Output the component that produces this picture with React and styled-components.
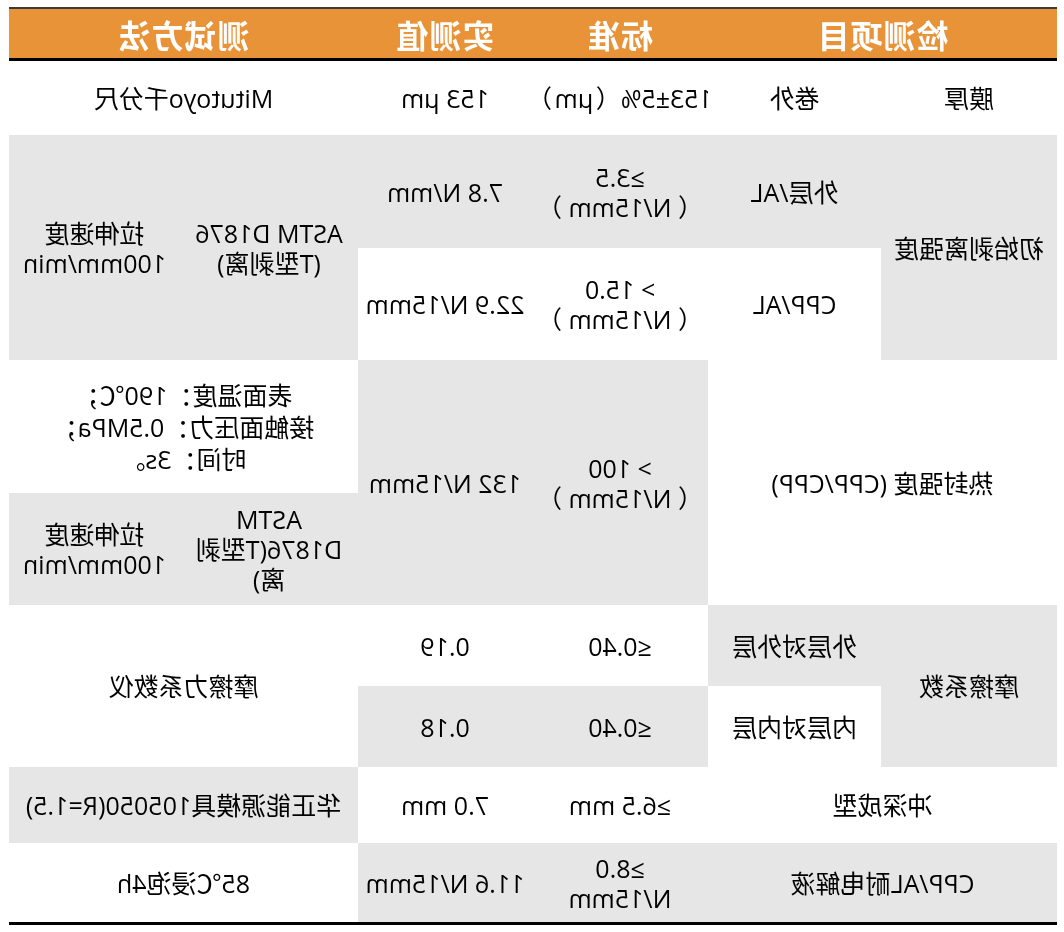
import React from 'react';
import styled, { createGlobalStyle } from 'styled-components';

const GlobalStyle = createGlobalStyle`
  html, body {
    margin: 0;
    padding: 0;
    background: #ffffff;
  }
  body {
    font-family: "Open Sans", "Noto Sans CJK SC", sans-serif;
  }
`;

// the reference shows the sheet mirrored left to right
const Page = styled.div`
  width: 1064px;
  box-sizing: border-box;
  padding: 7px 9px 0 7px;
  transform: scaleX(-1);
`;

const Table = styled.div`
  display: grid;
  grid-template-columns: 176px 173px 176px 174px 178px 171px;
  grid-template-rows: 52px 74px 113px 112px 133px 112px 81px 81px 76px 79px;
  border-top: 2px solid #3a3a3a;
  border-bottom: 3px solid #000000;
`;

const HeadCell = styled.div`
  grid-column: ${props => props.$col};
  grid-row: 1;
  box-sizing: border-box;
  background: #e99338;
  border-bottom: 3px solid #000000;
  color: #ffffff;
  font-family: "Noto Sans CJK SC", sans-serif;
  font-weight: 700;
  font-size: 32px;
  letter-spacing: 1px;
  display: flex;
  align-items: center;
  justify-content: center;
`;

const Cell = styled.div`
  grid-column: ${props => props.$col};
  grid-row: ${props => props.$row};
  background: ${props => (props.$shade ? '#e6e6e6' : '#ffffff')};
  color: #000000;
  font-size: 25px;
  line-height: ${props => props.$lh || '30px'};
  text-align: center;
  white-space: ${props => (props.$nowrap ? 'nowrap' : 'normal')};
  overflow: hidden;
  display: flex;
  align-items: center;
  justify-content: center;
`;

const App = () => {
  return (
    <>
      <GlobalStyle />
      <Page>
        <Table>
          <HeadCell $col="1 / 3">检测项目</HeadCell>
          <HeadCell $col="3">标准</HeadCell>
          <HeadCell $col="4">实测值</HeadCell>
          <HeadCell $col="5 / 7">测试方法</HeadCell>

          {/* 膜厚 */}
          <Cell $col="1" $row="2">膜厚</Cell>
          <Cell $col="2" $row="2">卷外</Cell>
          <Cell $col="3" $row="2" $nowrap>153±5%（{'\u200A'}μm{'\u200A'}）</Cell>
          <Cell $col="4" $row="2">153 μm</Cell>
          <Cell $col="5 / 7" $row="2">Mitutoyo千分尺</Cell>

          {/* 初始剥离强度 */}
          <Cell $col="1" $row="3 / 5" $shade>初始剥离强度</Cell>
          <Cell $col="2" $row="3" $shade>外层/AL</Cell>
          <Cell $col="2" $row="4">CPP/AL</Cell>
          <Cell $col="3" $row="3" $shade>≥3.5<br />（ N/15mm ）</Cell>
          <Cell $col="3" $row="4">&gt; 15.0<br />（ N/15mm ）</Cell>
          <Cell $col="4" $row="3" $shade>7.8 N/mm</Cell>
          <Cell $col="4" $row="4">22.9 N/15mm</Cell>
          <Cell $col="5" $row="3 / 5" $shade>ASTM D1876<br />(T型剥离)</Cell>
          <Cell $col="6" $row="3 / 5" $shade>拉伸速度<br />100mm/min</Cell>

          {/* 热封强度 */}
          <Cell $col="1 / 3" $row="5 / 7">热封强度 (CPP/CPP)</Cell>
          <Cell $col="3" $row="5 / 7" $shade>&gt; 100<br />（ N/15mm ）</Cell>
          <Cell $col="4" $row="5 / 7" $shade>132 N/15mm</Cell>
          <Cell $col="5 / 7" $row="5" $lh="32px">
            表面温度：190℃；<br />接触面压力：0.5MPa；<br />时间：3s。
          </Cell>
          <Cell $col="5" $row="6" $shade>ASTM<br />D1876(T型剥<br />离)</Cell>
          <Cell $col="6" $row="6" $shade>拉伸速度<br />100mm/min</Cell>

          {/* 摩擦系数 */}
          <Cell $col="1" $row="7 / 9" $shade>摩擦系数</Cell>
          <Cell $col="2" $row="7" $shade>外层对外层</Cell>
          <Cell $col="2" $row="8">内层对内层</Cell>
          <Cell $col="3" $row="7">≤0.40</Cell>
          <Cell $col="3" $row="8" $shade>≤0.40</Cell>
          <Cell $col="4" $row="7">0.19</Cell>
          <Cell $col="4" $row="8" $shade>0.18</Cell>
          <Cell $col="5 / 7" $row="7 / 9">摩擦力系数仪</Cell>

          {/* 冲深成型 */}
          <Cell $col="1 / 3" $row="9">冲深成型</Cell>
          <Cell $col="3" $row="9">≥6.5 mm</Cell>
          <Cell $col="4" $row="9">7.0 mm</Cell>
          <Cell $col="5 / 7" $row="9" $shade>华正能源模具105050(R=1.5)</Cell>

          {/* 耐电解液 */}
          <Cell $col="1 / 3" $row="10" $shade>CPP/AL耐电解液</Cell>
          <Cell $col="3" $row="10" $shade>≥8.0<br />N/15mm</Cell>
          <Cell $col="4" $row="10" $shade>11.6 N/15mm</Cell>
          <Cell $col="5 / 7" $row="10">85℃浸泡4h</Cell>
        </Table>
      </Page>
    </>
  );
};

export default App;
